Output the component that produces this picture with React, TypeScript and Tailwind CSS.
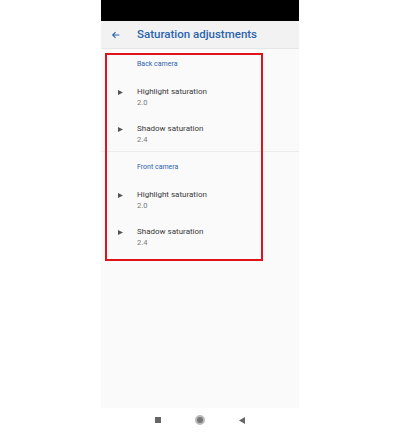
import React from 'react';

type Pref = { title: string; value: string };

const sections: { header: string; items: Pref[] }[] = [
  {
    header: 'Back camera',
    items: [
      { title: 'Highlight saturation', value: '2.0' },
      { title: 'Shadow saturation', value: '2.4' },
    ],
  },
  {
    header: 'Front camera',
    items: [
      { title: 'Highlight saturation', value: '2.0' },
      { title: 'Shadow saturation', value: '2.4' },
    ],
  },
];

const PrefRow: React.FC<{ item: Pref }> = ({ item }) => (
  <div className="flex items-start pt-[1px]">
    <div className="w-[36px] flex justify-end pr-[14px] pt-[3px]">
      <svg width="5" height="5" viewBox="0 0 5 5">
        <polygon points="0,0 5,2.5 0,5" fill="#555" />
      </svg>
    </div>
    <div className="flex flex-col">
      <span className="text-[8px] leading-[10px] text-[#3a3a3a]">{item.title}</span>
      <span className="text-[7.5px] leading-[11px] text-[#7a7a7a]">{item.value}</span>
    </div>
  </div>
);

const App: React.FC = () => {
  return (
    <div className="w-[400px] h-[432px] bg-white flex justify-center" style={{ fontFamily: 'Roboto, "Noto Sans", sans-serif' }}>
      <div className="w-[198px] h-full flex flex-col relative">
        <div className="h-[21px] bg-black" />
        <div className="h-[28px] bg-[#f2f2f2] border-b border-[#e6e6e6] flex items-center">
          <svg className="ml-[10px]" width="10" height="10" viewBox="0 0 24 24" fill="none" stroke="#2b63ad" strokeWidth="2.6">
            <path d="M20 12H5M11 5l-7 7 7 7" />
          </svg>
          <span className="ml-[16px] text-[11.5px] font-medium text-[#2b63ad]">Saturation adjustments</span>
        </div>
        <div className="flex-1 bg-[#fafafa] flex flex-col">
          {sections.map((s, i) => (
            <div key={s.header} className={i > 0 ? 'border-t border-[#ebebeb] pb-[6px]' : 'pb-[6px]'}>
              <div className="pl-[36px] pt-[11px] h-[37px] text-[7px] leading-[9px] text-[#2b63ad]">{s.header}</div>
              <div className="flex flex-col gap-[15px]">
                {s.items.map((it) => (
                  <PrefRow key={it.title} item={it} />
                ))}
              </div>
            </div>
          ))}
        </div>
        <div className="h-[24px] bg-white flex items-center justify-center gap-[34px]">
          <div className="w-[6px] h-[6px] bg-[#666]" />
          <div className="w-[10px] h-[10px] rounded-full bg-[#777] border-2 border-[#bbb]" />
          <svg width="6" height="7" viewBox="0 0 6 7">
            <polygon points="6,0 0,3.5 6,7" fill="#666" />
          </svg>
        </div>
        <div className="absolute left-[4px] top-[53px] w-[158px] h-[208px] border-2 border-[#e0121a]" />
      </div>
    </div>
  );
};

export default App;
